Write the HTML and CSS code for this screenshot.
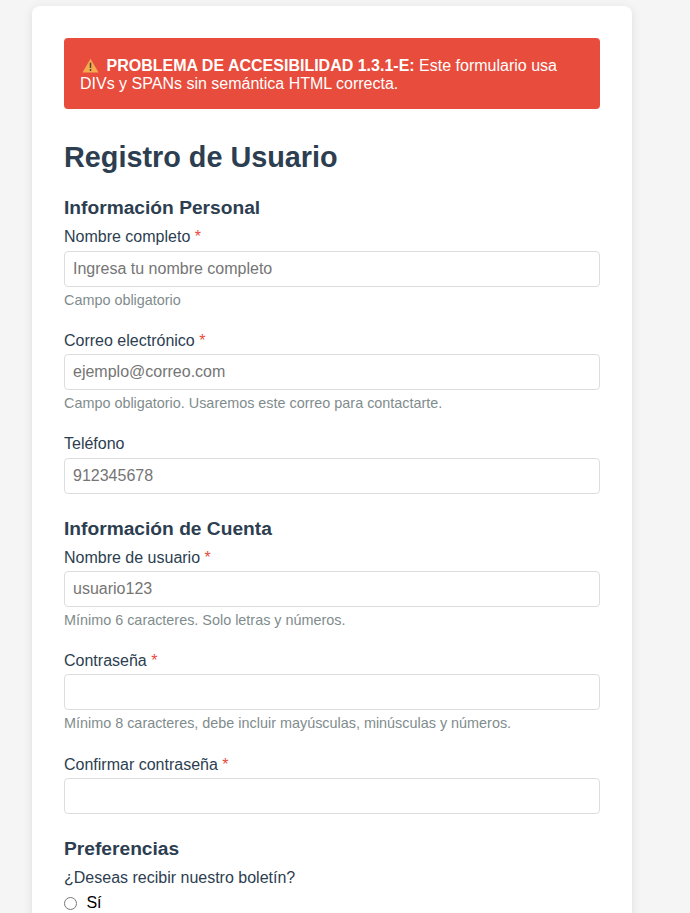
FILE: index.html
```html
<!DOCTYPE html>
<html lang="es">
<head>
<meta charset="utf-8">
<title>Registro de Usuario</title>
<link rel="stylesheet" href="styles.css">
</head>
<body>
<div class="card">
  <div class="alert"><svg class="warn" viewBox="0 0 18 16" width="17" height="15"><path d="M9 .8 17.6 15.4H.4Z" fill="#f6a94e"/><path d="M9 5v5.6" stroke="#4a4038" stroke-width="1.6"/><circle cx="9" cy="12.8" r="1" fill="#4a4038"/></svg> <strong>PROBLEMA DE ACCESIBILIDAD 1.3.1-E:</strong> Este formulario usa DIVs y SPANs sin semántica HTML correcta.</div>
  <div class="title">Registro de Usuario</div>

  <div class="section">Información Personal</div>
  <div class="field">
    <div class="label">Nombre completo <span class="req">*</span></div>
    <input class="input" placeholder="Ingresa tu nombre completo">
    <div class="hint">Campo obligatorio</div>
  </div>
  <div class="field">
    <div class="label">Correo electrónico <span class="req">*</span></div>
    <input class="input" placeholder="ejemplo@correo.com">
    <div class="hint">Campo obligatorio. Usaremos este correo para contactarte.</div>
  </div>
  <div class="field">
    <div class="label">Teléfono</div>
    <input class="input" placeholder="912345678">
  </div>

  <div class="section">Información de Cuenta</div>
  <div class="field">
    <div class="label">Nombre de usuario <span class="req">*</span></div>
    <input class="input" placeholder="usuario123">
    <div class="hint">Mínimo 6 caracteres. Solo letras y números.</div>
  </div>
  <div class="field">
    <div class="label">Contraseña <span class="req">*</span></div>
    <input class="input" type="password">
    <div class="hint">Mínimo 8 caracteres, debe incluir mayúsculas, minúsculas y números.</div>
  </div>
  <div class="field">
    <div class="label">Confirmar contraseña <span class="req">*</span></div>
    <input class="input" type="password">
  </div>

  <div class="section">Preferencias</div>
  <div class="label">¿Deseas recibir nuestro boletín?</div>
  <label class="radio"><input type="radio" name="news"> Sí</label>
</div>
</body>
</html>
```
FILE: styles.css
```css
html, body {
  margin: 0;
  height: 913px;
  overflow: hidden;
  background: #f5f5f5;
  font-family: "Liberation Sans", Arial, sans-serif;
  font-size: 16px;
  color: #333;
}
* { box-sizing: border-box; }
.card {
  width: 600px;
  margin: 6px 0 0 32px;
  padding: 32px;
  background: #fff;
  border-radius: 8px;
  box-shadow: 0 2px 10px rgba(0, 0, 0, .1);
}
.alert {
  background: #e74c3c;
  color: #fff;
  padding: 19px 16px 15px;
  border-radius: 4px;
  margin-bottom: 32px;
  line-height: 18.4px;
}
.warn { vertical-align: -2px; margin: 0 3px 0 2px; }
.title {
  font-size: 28.8px;
  font-weight: 700;
  color: #2c3e50;
  line-height: 32.6px;
  margin-bottom: 24px;
}
.section {
  font-size: 19.2px;
  font-weight: 700;
  color: #2c3e50;
  line-height: 22.8px;
  margin-top: 24px;
  margin-bottom: 7.2px;
}
.field { margin-bottom: 23px; }
.label {
  color: #2c3e50;
  line-height: 19.2px;
  margin-bottom: 4px;
}
.req { color: #e74c3c; }
.input {
  display: block;
  width: 100%;
  height: 36px;
  padding: 8px;
  border: 1px solid #ddd;
  border-radius: 4px;
  font: 16px "Liberation Sans", Arial, sans-serif;
  background: #fff;
}
.input::placeholder { color: #757575; }
.hint {
  font-size: 14.4px;
  color: #7f8c8d;
  line-height: 16.3px;
  margin-top: 5px;
}
.radio {
  display: block;
  margin-top: 7px;
  line-height: 18px;
  color: #000;
}
.radio input { margin: 3px 5px 0 0; vertical-align: top; width: 13px; height: 13px; }
```
